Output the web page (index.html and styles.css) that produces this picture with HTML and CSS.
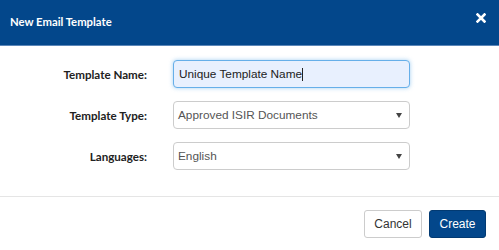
FILE: index.html
```html
<!DOCTYPE html>
<html>
<head>
<meta charset="utf-8">
<link rel="stylesheet" href="styles.css">
</head>
<body>
<div class="modal">
  <div class="modal-header">
    <span class="modal-title">New Email Template</span>
    <span class="close" aria-label="Close">
      <svg width="10" height="10" viewBox="0 0 10 10"><path d="M1.5 1.5 L8.5 8.5 M8.5 1.5 L1.5 8.5" stroke="#fff" stroke-width="2.6" stroke-linecap="square"/></svg>
    </span>
  </div>
  <div class="modal-body">
    <div class="form-grid">
      <label class="form-label">Template Name:</label>
      <div class="field field-focus">Unique Template Name<span class="caret-cursor"></span></div>
      <label class="form-label">Template Type:</label>
      <div class="field field-select"><span>Approved ISIR Documents</span><span class="arrow"></span></div>
      <label class="form-label">Languages:</label>
      <div class="field field-select"><span>English</span><span class="arrow"></span></div>
    </div>
  </div>
  <div class="modal-footer">
    <button class="btn btn-default">Cancel</button>
    <button class="btn btn-primary">Create</button>
  </div>
</div>
</body>
</html>
```
FILE: styles.css
```css
html, body {
  margin: 0;
  padding: 0;
  background: #fff;
}
.modal {
  width: 499px;
  height: 250px;
  display: flex;
  flex-direction: column;
}
.modal-header {
  height: 46px;
  box-sizing: border-box;
  background: #03478b;
  border-bottom: 1px solid #5b86b8;
  display: flex;
  align-items: center;
  justify-content: space-between;
  padding: 0 13px 3px 10px;
}
.modal-title {
  font-family: Lato, sans-serif;
  font-weight: 700;
  font-size: 11.3px;
  color: #fff;
}
.close {
  display: flex;
  margin-top: -6px;
}
.modal-body {
  padding: 14px 0 26px 0;
}
.form-grid {
  display: grid;
  grid-template-columns: 147px 237px;
  column-gap: 26px;
  row-gap: 13px;
}
.form-label {
  font-family: Lato, sans-serif;
  font-weight: 700;
  font-size: 11.6px;
  color: #222;
  text-align: right;
  align-self: center;
}
.field {
  height: 28px;
  box-sizing: border-box;
  border: 1px solid #ccc;
  border-radius: 4px;
  font-family: "Liberation Sans", Arial, sans-serif;
  font-size: 11.8px;
  color: #555;
  display: flex;
  align-items: center;
  padding: 0 8px 0 4px;
}
.field-focus {
  background: #e8f0fe;
  border-color: #66afe9;
  box-shadow: 0 0 4px rgba(102, 175, 233, 0.6);
  color: #222;
  padding-left: 5px;
}
.caret-cursor {
  display: inline-block;
  width: 1px;
  height: 13px;
  background: #222;
}
.field-select {
  justify-content: space-between;
}
.arrow {
  width: 0;
  height: 0;
  border-left: 3px solid transparent;
  border-right: 3px solid transparent;
  border-top: 5px solid #444;
  margin-right: -1px;
}
.modal-footer {
  border-top: 1px solid #e5e5e5;
  padding: 13px 13px 0 0;
  display: flex;
  justify-content: flex-end;
  gap: 7px;
}
.btn {
  height: 28px;
  box-sizing: border-box;
  border-radius: 3px;
  font-family: "Liberation Sans", Arial, sans-serif;
  font-size: 12px;
  padding: 0;
  cursor: pointer;
}
.btn-default {
  width: 58px;
  background: #fff;
  border: 1px solid #ccc;
  color: #333;
}
.btn-primary {
  width: 57px;
  background: #03478b;
  border: 1px solid #023a72;
  color: #fff;
}
```
